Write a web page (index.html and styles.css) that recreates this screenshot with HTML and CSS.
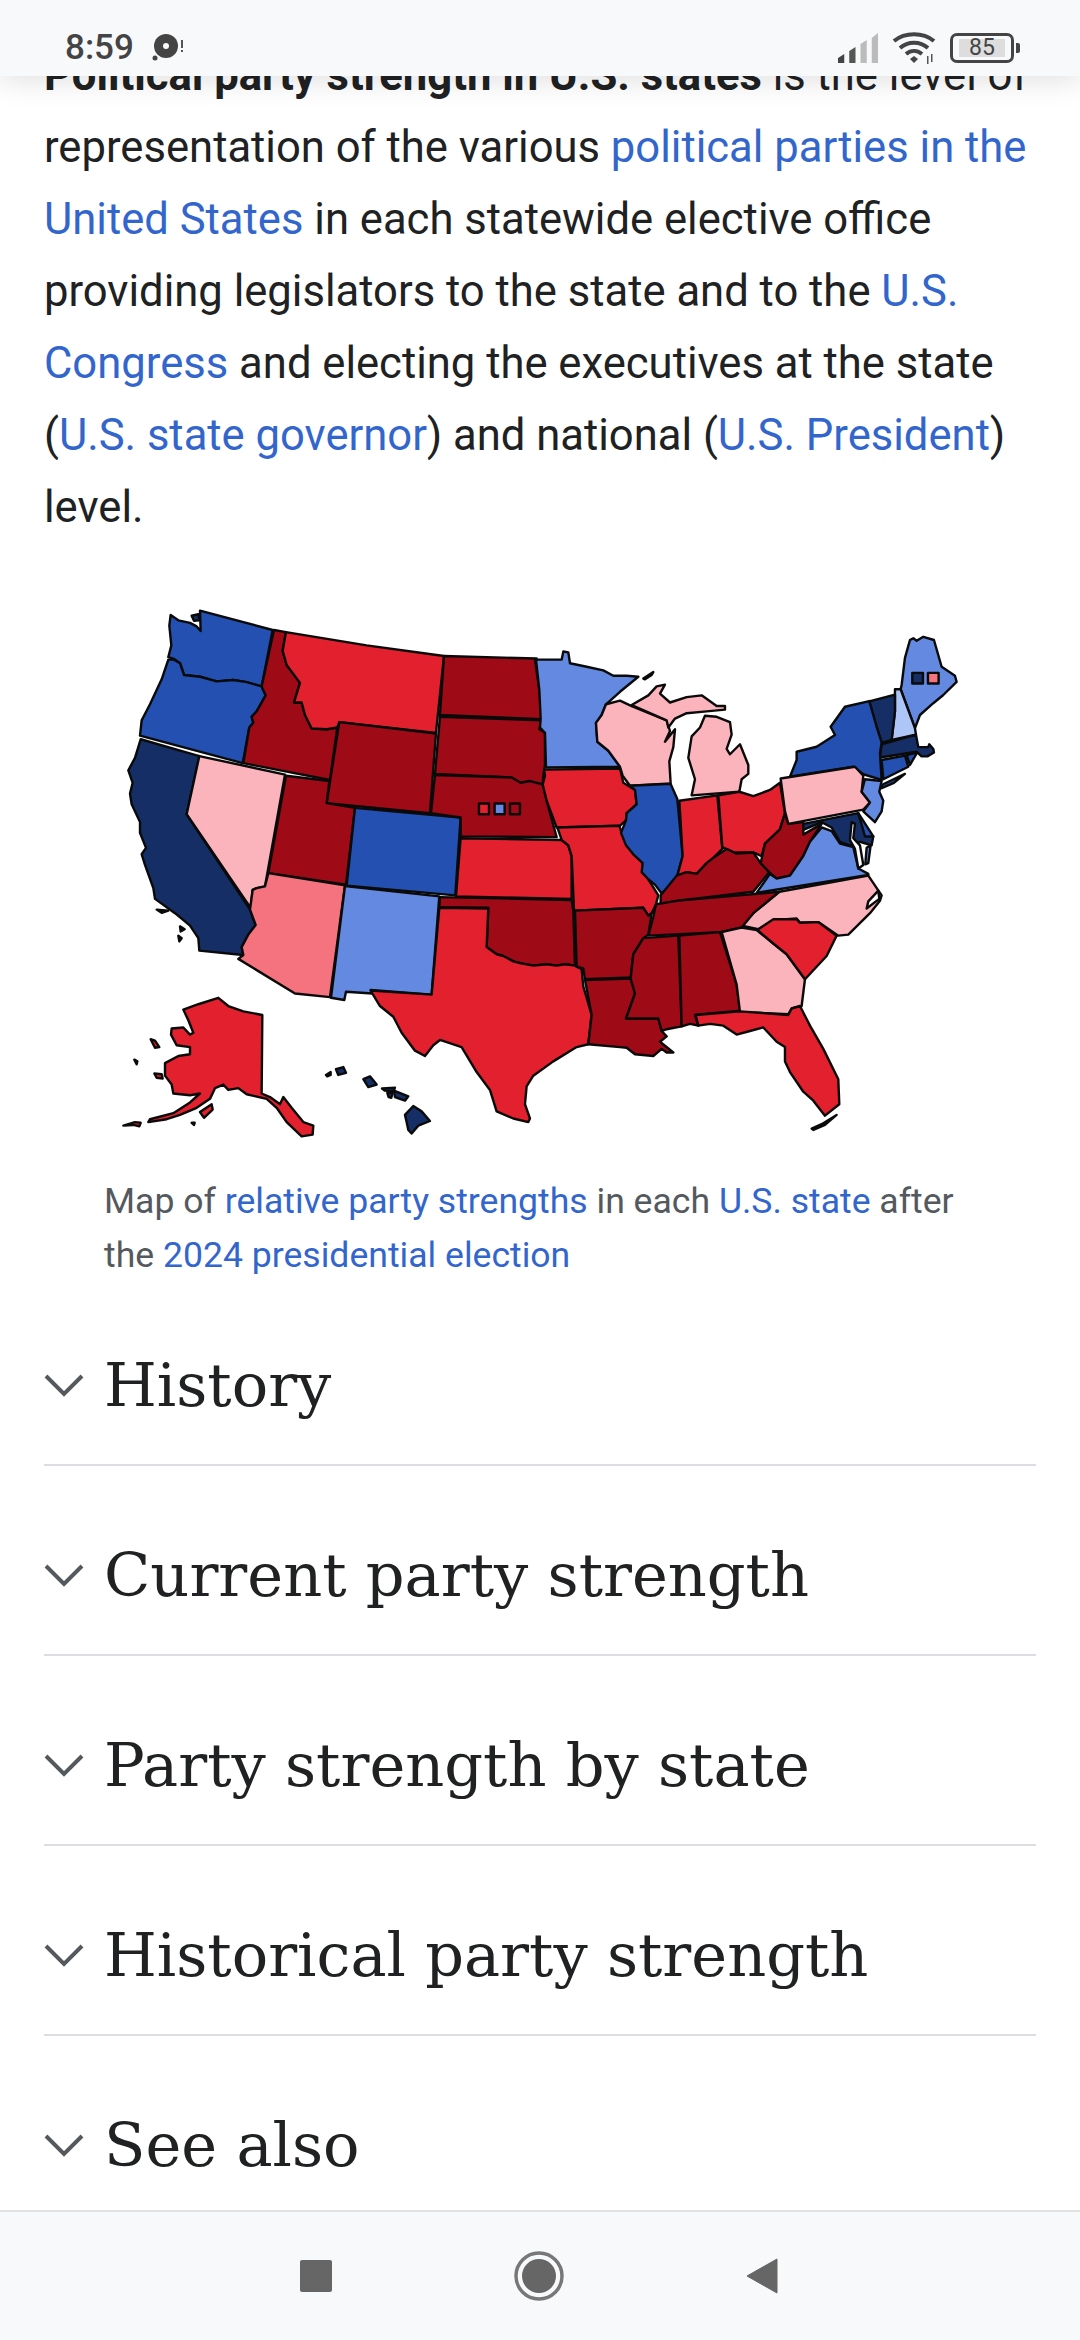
FILE: index.html
```html
<!DOCTYPE html>
<html lang="en">
<head>
    <meta charset="UTF-8">
    <meta name="viewport" content="width=device-width, initial-scale=1.0">
    <title>Political party strength in U.S. states</title>
    <link rel="stylesheet" href="styles.css">
</head>
<body>
    <div class="page">
        <!-- status bar lies over the scrolled article -->
        <header class="status">
            <div class="status_left">
                <span class="time">8:59</span>
                <svg class="notif" width="36" height="32" viewBox="0 0 36 32">
                    <circle cx="15" cy="14" r="12" fill="#444"/>
                    <circle cx="15" cy="14" r="3" fill="#f8f9fb"/>
                    <circle cx="4" cy="26" r="2.5" fill="#444"/>
                    <rect x="30" y="8" width="2" height="8" fill="#555"/>
                    <rect x="30" y="18" width="2" height="2" fill="#555"/>
                </svg>
            </div>
            <div class="status_right">
                <svg width="40" height="30" viewBox="0 0 32 30" preserveAspectRatio="none">
                    <polygon points="0,30 0,25 5,21 5,30" fill="#444"/>
                    <polygon points="9,30 9,18 14,14 14,30" fill="#555"/>
                    <polygon points="18,30 18,11 23,7 23,30" fill="#bbb"/>
                    <polygon points="27,30 27,5 32,0 32,30" fill="#bbb"/>
                </svg>
                <svg class="wifi" width="44" height="32" viewBox="0 0 44 32">
                    <path d="M2 9C13 0 31 0 42 9M8 16C16 9 28 9 36 16M14 22C19 18 25 18 30 22" fill="none" stroke="#444" stroke-width="4"/>
                    <polygon points="22,24 26,27 22,31 18,27" fill="#444"/>
                    <rect x="35" y="24" width="1.5" height="8" fill="#555"/>
                    <rect x="39" y="22" width="1.5" height="8" fill="#555"/>
                </svg>
                <div class="battery">
                    <div class="battery_body"><span class="battery_level">85</span></div>
                    <div class="battery_tip"></div>
                </div>
            </div>
        </header>

        <main class="content">
            <p class="intro"><b>Political party strength in U.S. states</b> is the level of representation of the various <a href="#">political parties in the United States</a> in each statewide elective office providing legislators to the state and to the <a href="#">U.S. Congress</a> and electing the executives at the state (<a href="#">U.S. state governor</a>) and national (<a href="#">U.S. President</a>) level.</p>

            <figure class="map_box">
                <svg class="map" width="1080" height="584" viewBox="0 590 1080 584">
                    <!-- west half, coordinates read from the left crop -->
                    <g transform="translate(100 590) scale(.3333 .3571)">
                        <polygon class="blue" points="300,58 518,112 485,270 440,258 400,252 350,256 300,243 252,238 240,205 222,193 205,188 214,155 208,100 212,70 235,85 270,92 290,102 302,115"/>
                        <polygon class="navy" points="275,72 295,68 298,85 282,86"/>
                        <polygon class="blue" points="205,195 222,195 240,205 252,238 300,243 350,256 400,252 440,258 485,270 497,295 470,340 455,355 460,372 448,385 428,485 120,408 125,365 150,320 185,250"/>
                        <polygon class="navy" points="122,418 298,465 260,628 450,895 467,938 445,965 425,1000 430,1022 298,1010 295,975 270,940 225,905 165,865 160,835 135,770 125,740 138,722 120,680 120,650 95,600 90,570 98,540 85,505 105,470"/>
                        <polygon class="navy" points="170,895 205,898 185,904"/>
                        <polygon class="navy" points="240,942 254,950 242,956"/>
                        <polygon class="navy" points="235,968 245,975 238,984"/>
                        <polygon class="pink" points="298,465 555,517 495,830 470,835 458,840 452,890 260,628"/>
                        <polygon class="dark" points="522,112 558,118 548,170 560,210 600,260 582,315 605,315 615,350 635,388 680,390 712,385 690,532 430,485 448,385 460,372 455,355 470,340 497,295 485,270"/>
                        <polygon class="red" points="558,118 800,155 1032,185 1008,400 718,370 712,385 680,390 635,388 615,350 605,315 582,315 600,260 560,210 548,170"/>
                        <polygon class="dark" points="718,370 1008,402 990,625 680,597"/>
                        <polygon class="dark" points="558,520 688,535 680,597 765,610 738,825 505,793"/>
                        <polygon class="blue" points="765,610 1082,637 1066,855 740,828"/>
                        <polygon class="salmon" points="505,793 735,827 690,1140 585,1130 415,1033 430,1022 425,1000 445,965 467,938 450,895 458,840 470,835 495,830"/>
                        <polygon class="light" points="735,829 1018,858 995,1133 812,1120 818,1130 738,1125 733,1148 693,1142"/>
                        <polygon class="dark" points="1032,185 1310,192 1305,195 1318,280 1325,362 1020,350"/>
                        <polygon class="dark" points="1020,355 1325,365 1318,390 1335,400 1335,490 1330,520 1328,545 1290,535 1260,540 1235,525 1005,515"/>
                        <polygon class="dark" points="1005,518 1235,525 1262,540 1290,535 1330,545 1340,590 1370,692 1082,690 1082,637 993,625"/>
                        <polygon class="red" points="1082,695 1385,700 1405,715 1415,745 1415,865 1068,858"/>
                        <polygon class="dark" points="1020,860 1415,868 1420,900 1425,1052 1395,1048 1370,1052 1340,1048 1300,1052 1260,1045 1240,1040 1210,1025 1190,1020 1160,1000 1165,890 1018,888"/>
                        <polygon class="red" points="1018,890 1165,892 1160,1000 1190,1020 1210,1025 1240,1040 1260,1045 1300,1052 1340,1048 1370,1052 1395,1048 1425,1052 1445,1062 1450,1110 1475,1190 1465,1272 1430,1280 1360,1320 1300,1360 1280,1390 1275,1440 1290,1480 1285,1490 1240,1480 1190,1460 1170,1400 1130,1350 1085,1280 1020,1260 1000,1275 975,1305 945,1290 905,1240 880,1195 840,1165 812,1122 995,1133"/>
                        <polygon class="red" points="250,1175 295,1160 355,1142 385,1165 430,1180 487,1190 485,1410 510,1420 540,1440 550,1420 575,1450 610,1490 640,1500 638,1525 605,1530 560,1490 530,1450 500,1425 440,1412 415,1395 385,1400 370,1385 345,1395 330,1425 290,1450 240,1470 200,1482 145,1490 150,1482 220,1465 270,1435 300,1410 270,1415 220,1410 215,1385 195,1360 195,1325 235,1305 270,1300 270,1280 230,1275 213,1245 215,1228 250,1225 270,1245 280,1240 265,1205"/>
                        <polygon class="red" points="152,1258 165,1262 178,1280 165,1282"/>
                        <polygon class="red" points="163,1354 185,1356 188,1368 170,1366"/>
                        <polygon class="navy" points="103,1315 112,1320 110,1328"/>
                        <polygon class="red" points="70,1500 105,1490 122,1492 118,1502 100,1498"/>
                        <polygon class="red" points="300,1462 335,1440 338,1455 312,1478"/>
                        <polygon class="navy" points="275,1492 284,1492 282,1498"/>
                        <polygon class="navy" points="708,1342 730,1336 738,1352 715,1358"/>
                        <polygon class="navy" points="678,1358 692,1350 692,1358 682,1362"/>
                        <polygon class="navy" points="790,1370 810,1362 830,1385 805,1392"/>
                        <polygon class="navy" points="846,1396 885,1394 880,1404 855,1402"/>
                        <polygon class="navy" points="862,1408 878,1408 874,1422 866,1420"/>
                        <polygon class="navy" points="882,1402 925,1418 915,1430 885,1420"/>
                        <polygon class="navy" points="915,1470 940,1445 965,1460 990,1487 955,1500 935,1522 925,1512 920,1490"/>
                        <rect class="red mark" x="1137" y="598" width="30" height="30"/>
                        <rect class="light mark" x="1184" y="598" width="30" height="30"/>
                        <rect class="dark mark" x="1230" y="598" width="30" height="30"/>
                    </g>

                    <!-- east half, coordinates read from the right crop -->
                    <g transform="translate(520 590) scale(.3333 .3571)">
                        <polygon class="light" points="48,195 125,195 130,172 145,175 150,205 200,215 250,225 280,240 320,240 355,243 300,285 258,320 245,350 228,372 232,425 265,450 300,495 78,497 75,400 60,385 62,360 58,280"/>
                        <polygon class="pink" points="370,248 400,230 395,238 375,250"/>
                        <polygon class="pink" points="258,320 300,310 335,325 440,365 450,395 435,425 465,390 460,440 448,480 452,542 330,548 308,520 300,495 265,450 232,425 228,372 245,350"/>
                        <polygon class="pink" points="335,322 385,295 410,270 435,265 420,290 450,315 500,300 545,295 590,325 615,325 615,335 560,340 500,345 465,360 445,385 440,365"/>
                        <polygon class="pink" points="555,352 590,355 630,370 635,405 620,445 630,460 660,432 685,490 685,515 665,530 658,565 515,575 525,530 505,470 515,410 540,385"/>
                        <polygon class="red" points="72,503 300,500 310,540 345,560 350,600 320,625 318,645 300,660 110,665 80,590 68,545 75,520"/>
                        <polygon class="red" points="112,665 298,660 305,680 340,740 365,760 385,810 415,855 408,880 395,905 385,912 370,890 162,898 155,745 145,715 125,700"/>
                        <polygon class="blue" points="330,548 452,543 472,585 488,745 465,825 450,830 425,850 405,825 385,810 365,790 368,765 340,740 318,715 303,680 318,645 320,625 350,600 345,560"/>
                        <polygon class="red" points="478,590 592,575 607,725 580,750 560,765 530,795 500,790 472,800 488,745"/>
                        <polygon class="red" points="595,575 658,565 700,577 750,560 780,540 795,625 780,670 735,710 725,745 700,735 640,735 607,720"/>
                        <polygon class="dark" points="422,855 470,800 500,790 530,795 560,765 580,750 620,725 650,738 700,735 722,765 748,790 700,845 475,870 422,880"/>
                        <polygon class="dark" points="795,625 805,655 850,650 850,685 905,655 870,705 850,745 810,800 770,808 748,790 722,765 735,710 780,670"/>
                        <polygon class="light" points="710,848 750,795 770,808 810,800 850,745 870,705 905,665 935,675 960,710 1000,720 1015,780 1045,795 1045,798"/>
                        <polygon class="navy" points="850,655 1015,625 1040,690 1060,690 1055,715 1020,705 990,715 960,705 935,665 905,650 850,672"/>
                        <polygon class="blue" points="1015,625 1060,690 1035,690"/>
                        <polygon class="light" points="1040,722 1052,715 1045,765 1036,768"/>
                        <polygon class="water" points="995,650 1005,655 1000,695 1020,715 1030,770 1015,780 1005,725 990,700"/>
                        <polygon class="light" points="1170,140 1180,135 1190,142 1210,131 1242,140 1265,215 1305,240 1310,257 1270,294 1240,317 1200,350 1185,387 1142,278 1145,266 1155,190"/>
                        <polygon class="pale" points="1125,278 1142,278 1185,387 1188,405 1115,420 1125,340"/>
                        <polygon class="navy" points="1048,312 1125,293 1125,340 1115,420 1085,428 1070,385"/>
                        <polygon class="navy" points="1085,432 1188,405 1195,440 1225,440 1228,432 1240,445 1242,455 1222,466 1205,466 1190,453 1080,469"/>
                        <polygon class="blue" points="1048,311 1070,383 1085,427 1080,457 1085,532 1030,516 1000,495 810,523 830,476 830,453 890,439 945,406 932,383 975,327"/>
                        <polygon class="blue" points="1085,476 1155,464 1165,495 1090,530"/>
                        <polygon class="blue" points="1160,462 1192,455 1170,490"/>
                        <polygon class="blue" points="1085,546 1155,515 1120,541 1085,555"/>
                        <polygon class="pink" points="782,528 1005,495 1030,520 1025,565 1050,595 1030,615 805,655 795,620"/>
                        <polygon class="light" points="1035,530 1085,535 1078,565 1090,590 1085,620 1065,650 1030,620 1050,595 1025,565"/>
                        <polygon class="pink" points="665,940 700,905 778,845 1045,800 1085,855 1080,870 1050,905 985,965 955,968 895,930 840,932 830,920 760,925 715,950"/>
                        <polygon class="water" points="1045,872 1075,842 1078,865 1040,892"/>
                        <polygon class="dark" points="385,968 400,915 408,880 475,870 778,845 700,905 665,945 600,958"/>
                        <polygon class="dark" points="165,898 370,890 385,912 395,905 385,965 370,975 340,1020 332,1085 195,1090 190,1060 170,1055"/>
                        <polygon class="dark" points="195,1092 332,1088 345,1130 318,1200 415,1200 425,1235 440,1250 420,1265 460,1295 440,1295 425,1285 400,1305 345,1300 320,1282 300,1280 205,1272 215,1190"/>
                        <polygon class="dark" points="370,975 475,968 485,1222 440,1230 425,1235 415,1200 318,1200 345,1130 332,1088 340,1020"/>
                        <polygon class="dark" points="478,968 600,958 650,1105 660,1178 525,1190 535,1220 510,1215 485,1222"/>
                        <polygon class="pink" points="605,958 665,945 710,952 760,990 800,1020 855,1090 845,1165 815,1172 805,1188 660,1182 650,1105"/>
                        <polygon class="red" points="712,952 760,922 830,922 840,932 895,930 950,968 920,1025 855,1090 800,1020 760,990"/>
                        <polygon class="red" points="527,1190 660,1180 805,1190 815,1172 840,1165 870,1220 910,1285 955,1370 958,1440 915,1472 880,1430 850,1405 810,1350 795,1320 795,1280 770,1265 730,1225 690,1235 650,1245 610,1220 570,1215 535,1220"/>
                        <polygon class="navy" points="875,1508 905,1496 950,1470 915,1498 880,1512"/>
                        <rect class="navy mark" x="1177" y="232" width="32" height="30"/>
                        <rect class="salmon mark" x="1224" y="232" width="32" height="30"/>
                    </g>
                </svg>
                <figcaption class="caption">Map of <a href="#">relative party strengths</a> in each <a href="#">U.S. state</a> after the <a href="#">2024 presidential election</a></figcaption>
            </figure>

            <section class="row">
                <svg class="chevron" width="40" height="24" viewBox="0 0 40 24"><path d="M2 2L20 20L38 2"/></svg>
                <h2 class="row_title">History</h2>
            </section>
            <section class="row">
                <svg class="chevron" width="40" height="24" viewBox="0 0 40 24"><path d="M2 2L20 20L38 2"/></svg>
                <h2 class="row_title">Current party strength</h2>
            </section>
            <section class="row">
                <svg class="chevron" width="40" height="24" viewBox="0 0 40 24"><path d="M2 2L20 20L38 2"/></svg>
                <h2 class="row_title">Party strength by state</h2>
            </section>
            <section class="row">
                <svg class="chevron" width="40" height="24" viewBox="0 0 40 24"><path d="M2 2L20 20L38 2"/></svg>
                <h2 class="row_title">Historical party strength</h2>
            </section>
            <section class="row">
                <svg class="chevron" width="40" height="24" viewBox="0 0 40 24"><path d="M2 2L20 20L38 2"/></svg>
                <h2 class="row_title">See also</h2>
            </section>
        </main>

        <nav class="nav_bar">
            <svg width="32" height="32" viewBox="0 0 32 32"><rect width="32" height="32" rx="2" fill="#666"/></svg>
            <svg width="50" height="50" viewBox="0 0 50 50"><circle cx="25" cy="25" r="23" fill="none" stroke="#777" stroke-width="3.5"/><circle cx="25" cy="25" r="17" fill="#666"/></svg>
            <svg width="32" height="36" viewBox="0 0 32 36"><path d="M31 1V35L1 18Z" fill="#666" stroke="#666" stroke-width="1" stroke-linejoin="round"/></svg>
        </nav>
    </div>
</body>
</html>
```

FILE: styles.css
```css
* {
    box-sizing: border-box;
}
body {
    margin: 0;
    background-color: #fff;
    font-family: Roboto, "Noto Sans", sans-serif;
    color: #202122;
}
a {
    color: #3366cc;
    text-decoration: none;
}
.page {
    position: relative;
    width: 1080px;
    height: 2340px;
    display: flex;
    flex-direction: column;
    overflow: hidden;
}

/* status bar */
.status {
    position: absolute;
    top: 0;
    left: 0;
    width: 100%;
    height: 76px;
    padding: 32px 60px 0 65px;
    display: flex;
    justify-content: space-between;
    align-items: flex-start;
    background-color: #f8f9fb;
    box-shadow: 0 4px 30px rgba(0, 0, 0, .13);
}
.status_left,
.status_right {
    display: flex;
    align-items: center;
}
.status_right {
    gap: 14px;
}
.time {
    font-size: 35px;
    line-height: 32px;
    font-weight: 500;
    color: #444;
}
.notif {
    margin-left: 17px;
}
.battery {
    display: flex;
    align-items: center;
    gap: 2px;
}
.battery_body {
    width: 64px;
    height: 30px;
    padding: 3px 6px;
    border: 3px solid #444;
    border-radius: 7px;
}
.battery_level {
    display: block;
    height: 18px;
    background-color: #ddd;
    font-size: 23px;
    line-height: 18px;
    text-align: center;
    color: #444;
}
.battery_tip {
    width: 4px;
    height: 10px;
    background-color: #444;
    border-radius: 0 2px 2px 0;
}

/* article */
.content {
    flex: 1;
    overflow: hidden;
    padding-top: 40px;
}
.intro {
    margin: 0;
    padding: 0 44px;
    font-size: 43.6px;
    line-height: 72px;
}
.map_box {
    margin: 46px 0 0;
}
.map {
    display: block;
    filter: blur(.5px);
}
.map polygon,
.map .mark {
    stroke: #0a0a0a;
    stroke-width: 2.4;
    stroke-linejoin: round;
    vector-effect: non-scaling-stroke;
}
.navy { fill: #152f66; }
.blue { fill: #2350b1; }
.light { fill: #6489e0; }
.pale { fill: #adc6f7; }
.red { fill: #e3202d; }
.dark { fill: #9e0b16; }
.pink { fill: #fbb4bc; }
.salmon { fill: #f4737e; }
.water { fill: #fff; }

.caption {
    height: 102px;
    padding: 0 100px 0 104px;
    font-size: 35.6px;
    line-height: 54px;
    color: #54595d;
}

/* collapsed sections */
.row {
    height: 190px;
    margin: 0 44px;
    padding-top: 86px;
    display: flex;
    align-items: flex-start;
    gap: 20px;
    border-bottom: 2px solid #dadde1;
}
.chevron {
    flex: none;
    margin-top: 12px;
}
.chevron path {
    fill: none;
    stroke: #54595d;
    stroke-width: 4;
}
.row_title {
    margin: 3px 0 0;
    font-family: "DejaVu Serif", serif;
    font-size: 60.6px;
    font-weight: normal;
    line-height: 40px;
    white-space: nowrap;
}

/* bottom navigation */
.nav_bar {
    flex: none;
    height: 130px;
    padding-right: 2px;
    display: flex;
    justify-content: center;
    align-items: center;
    gap: 182px;
    background-color: #f8f9fb;
    border-top: 2px solid #e2e2e2;
}
```
